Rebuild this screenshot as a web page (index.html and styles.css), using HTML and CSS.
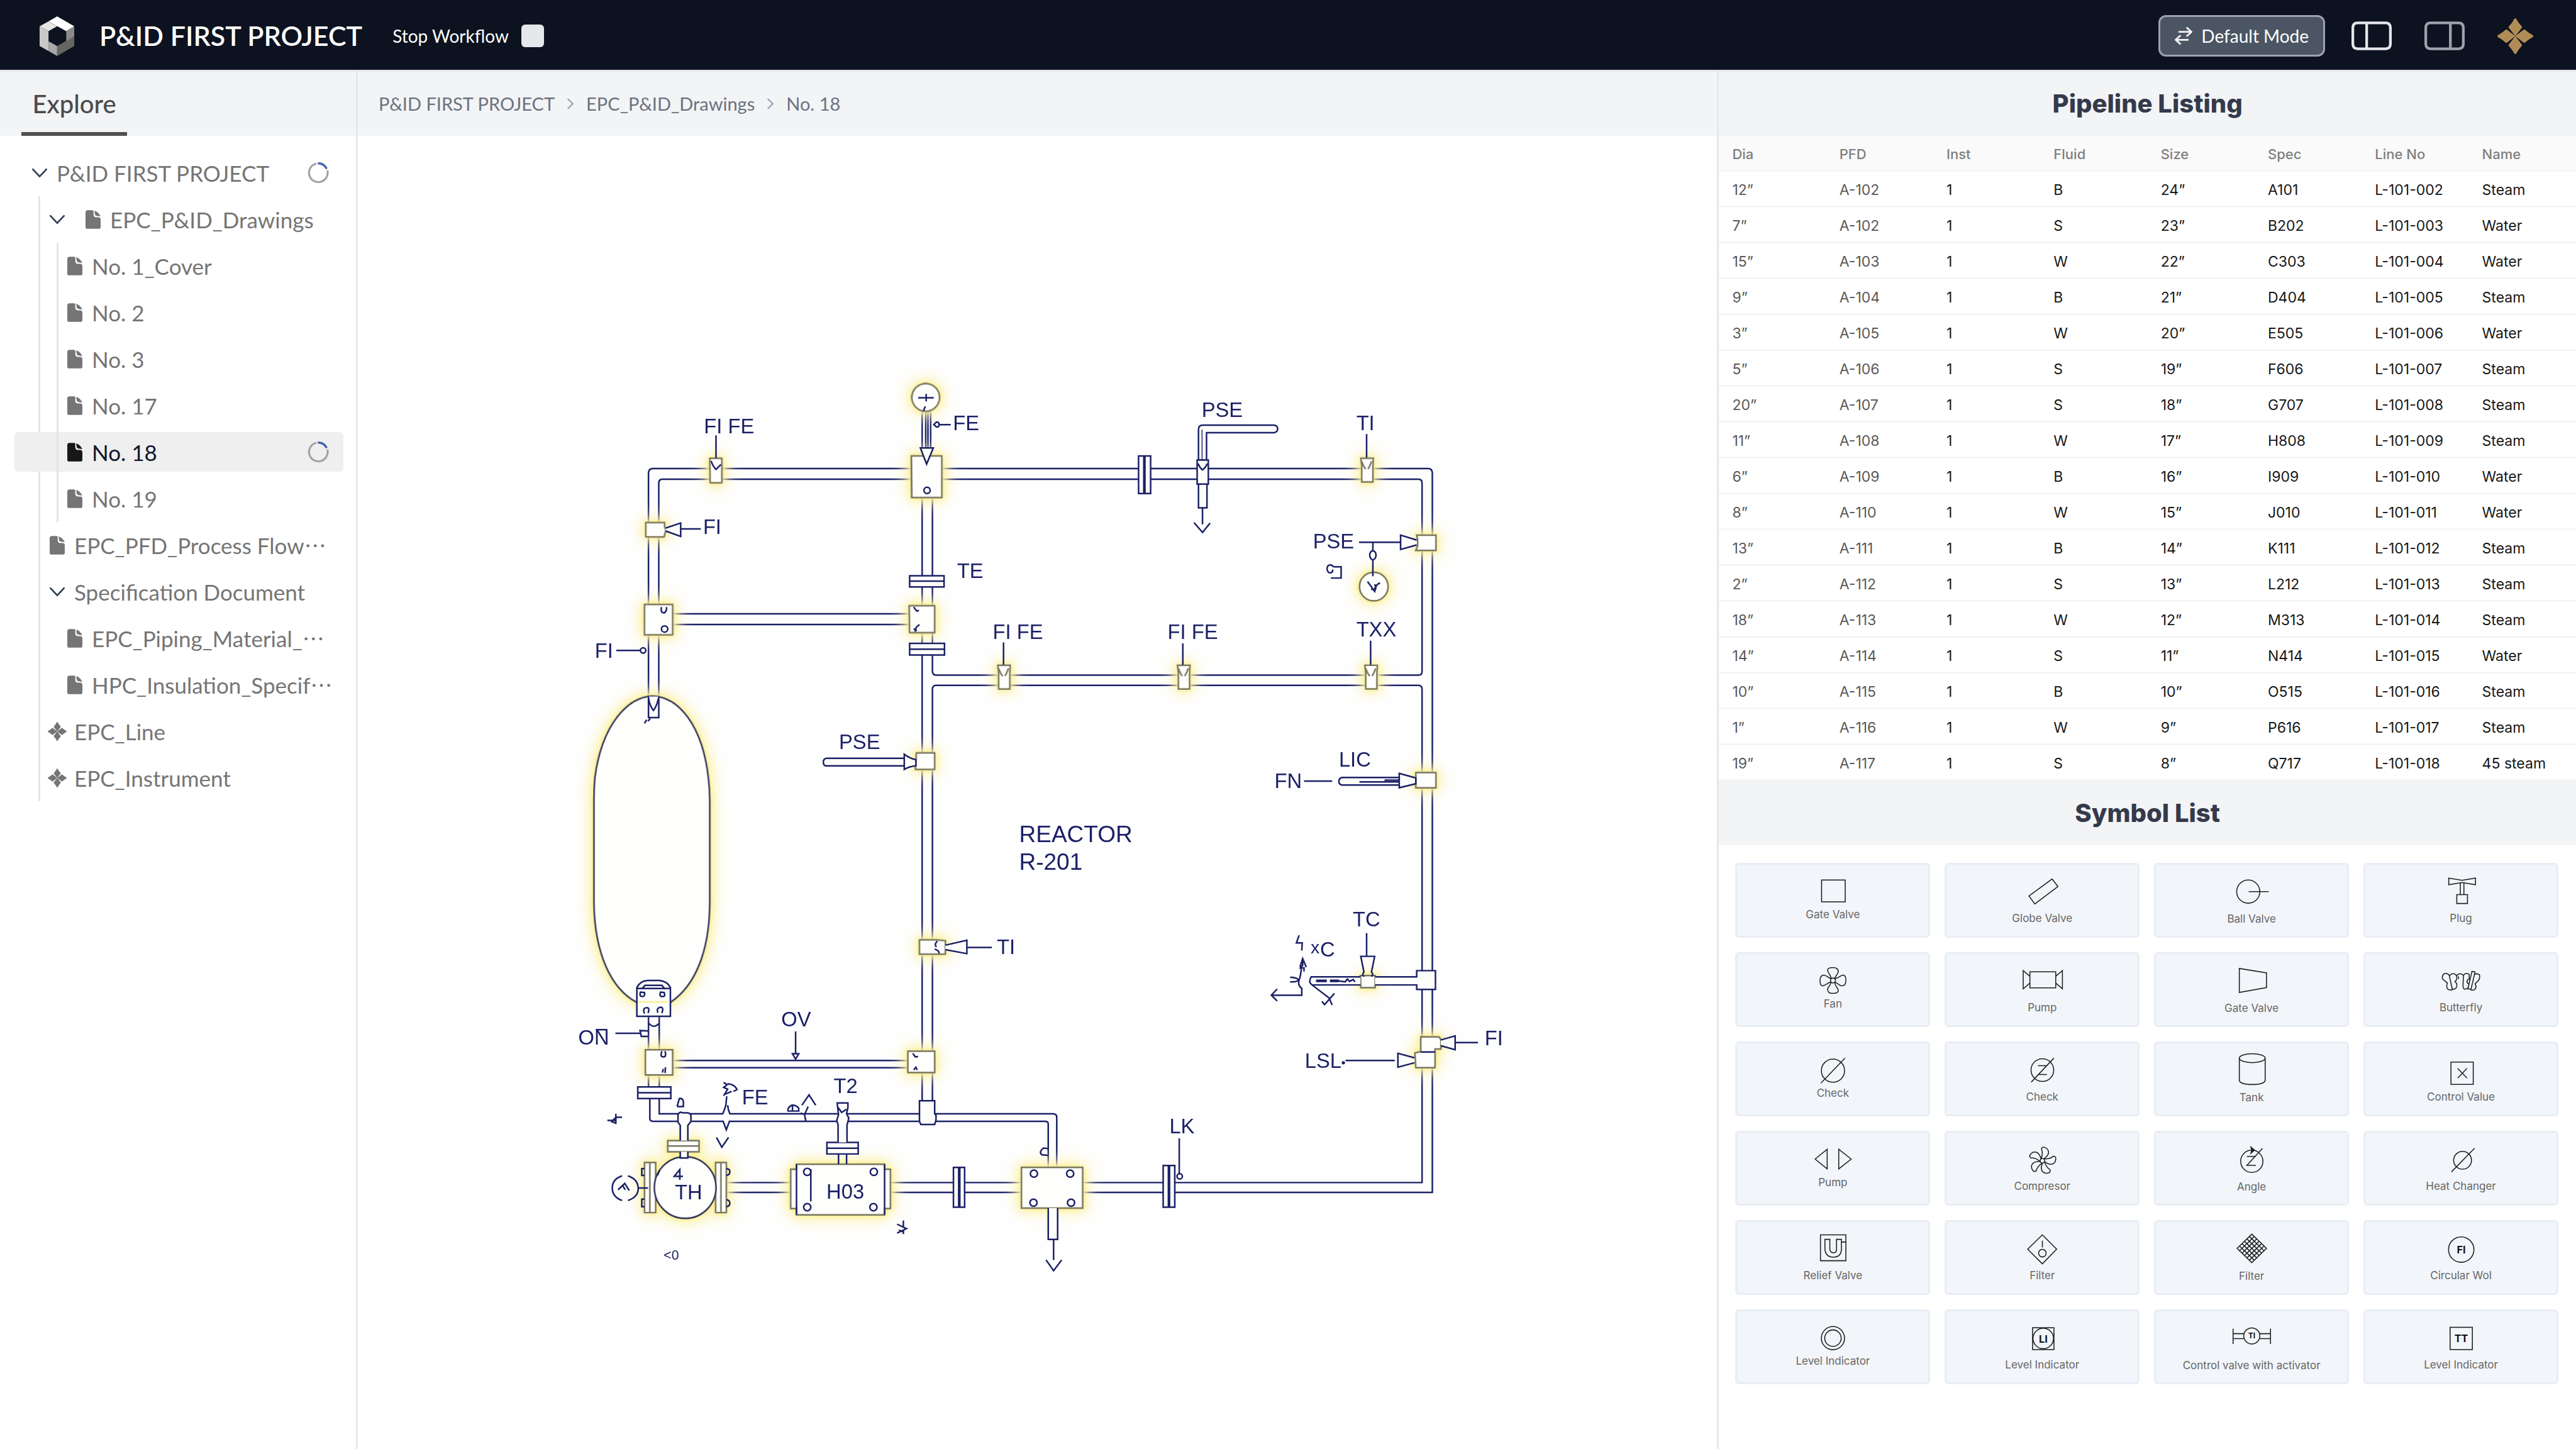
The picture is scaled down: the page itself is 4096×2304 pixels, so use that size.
FILE: index.html
```html
<!DOCTYPE html>
<html lang="en">
<head>
<meta charset="utf-8">
<meta name="viewport" content="width=device-width, initial-scale=1">
<title>P&amp;ID First Project</title>
<link rel="stylesheet" href="styles.css">
</head>
<body>
<svg class="defs" aria-hidden="true">
  <symbol id="file" viewBox="0 0 34 42"><path d="M5 0H16Q18 0 18 3V10Q18 15 23 16H30Q34 17 34 21V38Q34 42 30 42H4Q0 42 0 38V5Q0 0 5 0Z"/><path d="M20 1Q29 4 34 14L25 13Q21 12 21 8Z"/></symbol>
  <symbol id="chev" viewBox="0 0 34 42"><path d="M2 13 17 29 32 13" fill="none" stroke="#334155" stroke-width="4" stroke-linecap="round" stroke-linejoin="round"/></symbol>
  <symbol id="gem" viewBox="0 0 80 80"><path id="petal" d="M38 1Q40-1 42 1Q46 9 54 18Q56 20 54 22L40 40 26 22Q24 20 26 18Q34 9 38 1Z"/><use href="#petal" transform="rotate(90 40 40)"/><use href="#petal" transform="rotate(180 40 40)"/><use href="#petal" transform="rotate(270 40 40)"/></symbol>
  <symbol id="spin" viewBox="-24 -24 48 48"><path d="M21-4A21 21 0 1 1-6-20.500" fill="none" stroke="#a3a3a3" stroke-width="4.500" stroke-linecap="round"/><path d="M1-21.500A21 21 0 0 1 18-11" fill="none" stroke="#4a68a8" stroke-width="5" stroke-linecap="round"/></symbol>
  <symbol id="valve" viewBox="-20 0 40 60" overflow="visible"><path d="M-14 1H14L13 17V54H-12V17Z"/><path d="M-12 8Q-8 20-3 25M10 8Q6 20 2 25" fill="none"/></symbol>
</svg>

<header class="topbar">
  <svg class="logo" viewBox="0 0 78 89" role="img" aria-label="Logo"><path fill="#fff" d="M39.500 0 78 22 60 33 20 11Z"/><path fill="#e5e5e5" d="M20 11 39.500 22 20 33 0 22Z"/><path fill="#c9c9c7" d="M0 22 20 33V78L0 67Z"/><path fill="#a8a8a8" d="M20 56 39.500 67V89L20 78Z"/><path fill="#666563" d="M39.500 67 78 45V67L39.500 89Z"/><path fill="#8b8c8a" d="M60 33 78 22V45L60 56Z"/></svg>
  <h1 class="title">P&amp;ID FIRST PROJECT</h1>
  <button class="stop" type="button">Stop Workflow<span class="stop-mark"></span></button>
  <div class="tools">
    <button class="mode" type="button"><svg viewBox="0 0 40 40" class="swap"><path d="M10 11H38M28 2 38 11 28 20M30 29H2M12 20 2 29 12 38" fill="none" stroke="#f3f4f6" stroke-width="4" stroke-linejoin="round" stroke-linecap="round"/></svg>Default Mode</button>
    <div class="toggles">
      <button class="toggle" type="button" aria-label="Left panel"><svg viewBox="0 0 90 64"><path d="M14 3H76Q87 3 87 14V50Q87 61 76 61H14Q3 61 3 50V14Q3 3 14 3ZM34 3V61" fill="none" stroke="#e5e7eb" stroke-width="6"/></svg></button>
      <button class="toggle" type="button" aria-label="Right panel"><svg viewBox="0 0 90 64"><path d="M14 3H76Q87 3 87 14V50Q87 61 76 61H14Q3 61 3 50V14Q3 3 14 3ZM58 3V61" fill="none" stroke="#9ca3af" stroke-width="6"/></svg></button>
      <button class="account" type="button" aria-label="Account"><svg viewBox="0 0 80 80"><use href="#gem"/></svg></button>
    </div>
  </div>
</header>

<div class="shell">
  <aside class="side">
    <div class="bar side-bar"><button class="tab" type="button">Explore</button></div>
    <ul class="tree">
      <li>
        <button class="row l0" type="button" aria-expanded="true"><svg class="ic"><use href="#chev"/></svg><span>P&amp;ID FIRST PROJECT</span><svg class="spin"><use href="#spin"/></svg></button>
        <ul class="branch b1">
          <li>
            <button class="row l1" type="button" aria-expanded="true"><svg class="ic wide"><use href="#chev"/></svg><svg class="ic"><use href="#file"/></svg><span>EPC_P&amp;ID_Drawings</span></button>
            <ul class="branch b2">
              <li><button class="row l2" type="button"><svg class="ic"><use href="#file"/></svg><span>No. 1_Cover</span></button></li>
              <li><button class="row l2" type="button"><svg class="ic"><use href="#file"/></svg><span>No. 2</span></button></li>
              <li><button class="row l2" type="button"><svg class="ic"><use href="#file"/></svg><span>No. 3</span></button></li>
              <li><button class="row l2" type="button"><svg class="ic"><use href="#file"/></svg><span>No. 17</span></button></li>
              <li><button class="row l2 active" type="button"><svg class="ic"><use href="#file"/></svg><span>No. 18</span><svg class="spin"><use href="#spin"/></svg></button></li>
              <li><button class="row l2" type="button"><svg class="ic"><use href="#file"/></svg><span>No. 19</span></button></li>
            </ul>
          </li>
          <li><button class="row l1" type="button"><svg class="ic"><use href="#file"/></svg><span>EPC_PFD_Process Flow<span class="more" lang="ja">…</span></span></button></li>
          <li>
            <button class="row l1" type="button" aria-expanded="true"><svg class="ic"><use href="#chev"/></svg><span>Specification Document</span></button>
            <ul class="branch">
              <li><button class="row l2" type="button"><svg class="ic"><use href="#file"/></svg><span>EPC_Piping_Material_<span class="more" lang="ja">…</span></span></button></li>
              <li><button class="row l2" type="button"><svg class="ic"><use href="#file"/></svg><span>HPC_Insulation_Specif<span class="more" lang="ja">…</span></span></button></li>
            </ul>
          </li>
          <li><button class="row l1" type="button"><svg class="ic gem" viewBox="0 0 80 80"><use href="#gem"/></svg><span>EPC_Line</span></button></li>
          <li><button class="row l1" type="button"><svg class="ic gem" viewBox="0 0 80 80"><use href="#gem"/></svg><span>EPC_Instrument</span></button></li>
        </ul>
      </li>
    </ul>
  </aside>

  <main class="main">
    <nav class="bar crumbs" aria-label="Breadcrumb">
      <a href="#">P&amp;ID FIRST PROJECT</a>
      <svg viewBox="0 0 16 24"><path d="M3 2 13 12 3 22"/></svg>
      <a href="#">EPC_P&amp;ID_Drawings</a>
      <svg viewBox="0 0 16 24"><path d="M3 2 13 12 3 22"/></svg>
      <a href="#">No. 18</a>
    </nav>
    <div class="canvas">
      <svg class="drawing" viewBox="800 680 3040 2184" role="img" aria-label="Piping and instrumentation diagram">
        <rect class="sheet" x="914" y="784" width="2800" height="2060"/>
        <g class="pipe">
          <path d="M1450 1604V1058Q1450 1047 1460 1047H3193Q3203 1047 3203 1057V2666H1624"/>
          <path d="M1473 1604V1080Q1473 1071 1481 1071H3172Q3180 1071 3180 1080V1501Q3180 1509 3172 1509H2093Q2085 1509 2085 1500V1071"/>
          <path d="M2062 1071V2461M2085 2461V1541Q2085 1532 2093 1532H3172Q3180 1532 3180 1541V2644H1624"/>
          <path d="M1504 1372H2034M1504 1396H2034M1504 2371H2030M1504 2387H2030"/>
          <path d="M1450 2272V2430M1474 2272V2430M1451 2288Q1461 2300 1473 2289"/>
          <path d="M1453 2456V2500Q1453 2507 1460 2507H1617L1624 2526 1631 2507H2337Q2344 2507 2344 2513V2610"/>
          <path d="M1474 2456V2490H1616Q1620 2482 1623 2471L1625 2451M1627 2471Q1628 2482 1632 2490H2355Q2363 2490 2363 2498V2610"/>
          <path d="M2062 919V1001M2070 919V1001M2075 919V1001M2081 919V1001"/>
        </g>
        <g class="hot">
          <path class="dark" d="M1459 1556C1405 1556 1345 1620 1330 1740Q1328 1765 1328 1790V2020C1330 2130 1365 2210 1424 2241H1499C1553 2205 1586 2130 1587 2020V1790Q1587 1765 1584 1740C1571 1620 1515 1556 1459 1556Z"/>
          <circle cx="2070" cy="888" r="31"/>
          <path d="M2038 1019H2106V1112H2039Z"/>
          <path d="M1587 1024H1614V1079H1588Z"/>
          <path d="M1444 1168H1486V1178L1489 1184 1485 1200H1444Z"/>
          <path d="M1441 1351H1504V1419H1441Z"/>
          <path d="M2033 1354H2090V1414H2034Z"/>
          <path d="M2049 1683H2090V1720H2047Z"/>
          <path d="M2056 2101H2093L2114 2103V2133H2056Z"/>
          <use href="#valve" x="2225" y="1486" width="40" height="60"/>
          <use href="#valve" x="2627" y="1486" width="40" height="60"/>
          <use href="#valve" x="3046" y="1486" width="40" height="60"/>
          <use href="#valve" x="3037" y="1023" width="40" height="60"/>
          <path d="M3168 1196H3211V1230H3166L3170 1220V1206Z"/>
          <circle cx="3072" cy="1311" r="32"/>
          <path d="M3166 1727H3211V1761H3166Z"/>
          <path d="M3042 2181H3075V2208H3043Z"/>
          <path d="M3177 2318H3218L3222 2324V2345H3209V2387H3166L3164 2354 3177 2351Z"/>
          <path d="M1443 2347H1504V2403H1443Z"/>
          <path d="M2030 2350H2090V2398H2030Z"/>
          <path d="M1493 2550H1563V2575H1493ZM1493 2562H1563"/>
          <path d="M1441 2599H1466V2711H1441ZM1453 2599V2711M1600 2599H1624V2711H1600ZM1612 2599V2711"/>
          <circle class="dark" cx="1532" cy="2655" r="69"/>
          <path d="M1768 2614H1781V2603H1978V2614H1991V2702H1978V2716H1781V2702H1768Z"/>
          <path d="M2284 2610H2421V2701H2284Z"/>
        </g>
        <g class="ink">
          <path d="M2053 889H2088M2071 880V897M2069 908 2065 918"/>
          <path class="solid" d="M2058 1001H2087L2072 1037Z"/><circle cx="2073" cy="1096" r="7"/>
          <path d="M2088 949 2094 943Q2100 943 2100 949T2094 954ZM2100 949H2126"/>
          <path d="M1601 973V1024M1590 1030Q1595 1044 1601 1049L1612 1038"/>
          <path class="solid" d="M1489 1180 1522 1169V1199L1489 1187"/><path d="M1522 1182H1567"/>
          <path d="M1479 1357Q1476 1370 1485 1370Q1492 1366 1490 1357"/><ellipse cx="1486" cy="1406" rx="7" ry="7"/>
          <path d="M1378 1454H1432"/><circle cx="1438" cy="1454" r="6"/>
          <path class="solid" d="M1450 1557V1604H1473V1557"/><path d="M1450 1562Q1454 1580 1461 1588Q1468 1580 1472 1562M1441 1617 1446 1609M1449 1612 1454 1606"/>
          <path class="solid" d="M2034 1287H2111V1312H2034ZM2034 1438H2112V1464H2034Z"/><path d="M2034 1299H2111M2034 1451H2112"/>
          <path d="M2043 1357 2050 1366 2055 1364M2056 1396 2049 1402 2046 1412M2043 1405 2050 1410"/>
          <path class="solid" d="M2022 1695H1849Q1841 1695 1841 1704T1849 1712H2022"/>
          <path class="solid" d="M2022 1686Q2035 1696 2048 1698V1712Q2034 1713 2022 1720Z"/>
          <path d="M2096 2104Q2088 2112 2094 2117M2090 2122Q2100 2124 2100 2132"/><path class="solid" d="M2114 2113 2162 2102V2132L2114 2123"/><path d="M2162 2118H2218"/>
          <path d="M2244 1436V1486M2645 1438V1486M3065 1432V1486M3056 970V1023"/>
          <path class="solid" d="M2546 1019H2573V1103H2546Z"/><path class="bold" d="M2559 1019V1103"/>
          <path class="solid" d="M2680 1028V960Q2680 950 2690 950H2849Q2857 951 2857 958T2849 967H2698V1028Z"/><path class="thin" d="M2688 960V1028"/>
          <path class="solid" d="M2677 1028H2702V1082H2677ZM2680 1082H2699V1135H2680Z"/><path d="M2679 1036Q2684 1047 2689 1050Q2695 1046 2700 1036M2689 1135V1172M2670 1168 2689 1190 2706 1169"/>
          <path d="M3039 1212H3132M3070 1212V1231"/><ellipse cx="3070" cy="1241" rx="7" ry="10"/><path d="M3070 1251V1288M3058 1300 3067 1312 3074 1322 3077 1313 3074 1306M3066 1317H3074Q3077 1306 3086 1303"/>
          <path class="solid" d="M3168 1207 3132 1196V1228L3168 1218"/>
          <path d="M2982 1267Q2977 1260 2970 1264Q2964 1273 2972 1280Q2981 1281 2980 1273M2982 1267H2999V1292H2976"/>
          <path d="M2916 1746H2979"/><path class="solid" d="M3129 1738H3001Q2994 1740 2994 1747T3001 1755H3129M3129 1729 3166 1739V1752L3129 1761Z"/><path d="M3096 1744H3129M3040 1748H3129"/>
          <path d="M3056 2086V2138"/><path class="solid" d="M3042 2184H2932Q2927 2192 2930 2198L2934 2202H3042M3075 2184H3168V2170H3210V2212H3168V2202H3075"/>
          <path d="M3051 2182Q3044 2182 3050 2173L3043 2138H3074L3067 2173Q3073 2182 3066 2182"/>
          <path class="bold" d="M2943 2193H2967M2974 2193H2994"/><path d="M2994 2193 3008 2195 3013 2189 3018 2194 3026 2190 3030 2195"/>
          <path d="M2934 2202 2972 2231 2979 2247M2984 2221 2962 2246 2956 2239"/>
          <path d="M2905 2091 2899 2108H2912L2911 2125M2907 2162 2913 2143 2921 2162M2913 2145V2158L2908 2164H2916V2172M2910 2164Q2909 2180 2905 2191T2911 2210V2225H2843M2856 2211 2843 2225 2856 2238M2885 2185Q2900 2185 2904 2191Q2900 2196 2885 2195"/>
          <path class="solid" d="M3222 2325 3254 2316V2347L3222 2338M3163 2365 3126 2355V2386L3163 2376"/>
          <path d="M3254 2331H3305M3009 2371H3119M3177 2352H3209"/><circle cx="3004" cy="2376" r="2"/>
          <path class="solid" d="M1424 2272V2208Q1431 2193 1448 2192H1475Q1492 2194 1499 2208V2272ZM1424 2210H1499M1436 2210 1442 2203H1480L1486 2210"/>
          <path class="gold" d="M1426 2240H1497"/>
          <path d="M1432 2218Q1429 2228 1436 2228T1441 2219ZM1477 2218Q1473 2228 1481 2228T1485 2219ZM1441 2266Q1436 2254 1445 2253T1449 2265M1471 2264Q1467 2254 1476 2252T1480 2265"/>
          <path d="M1376 2310H1431M1449 2305 1431 2304 1434 2317 1449 2317M1332 2302H1358"/>
          <path d="M1480 2350Q1475 2363 1483 2363T1487 2350M1481 2398 1483 2390M1487 2399 1488 2386"/>
          <path d="M1779 2306V2356M1772 2356H1786L1779 2368ZM2041 2355 2047 2363 2053 2362M2043 2392 2048 2386 2051 2392"/>
          <path class="solid" d="M1426 2430H1500V2456H1426ZM1849 2554H1919V2580H1849Z"/><path d="M1426 2443H1500M1849 2567H1919"/>
          <path class="solid" d="M2056 2461H2090V2490L2093 2493V2504L2090 2514H2059L2056 2507Z"/>
          <path class="solid" d="M1521 2550V2516L1516 2509V2492Q1520 2484 1526 2488H1538Q1545 2490 1545 2494V2507L1538 2516V2550M1521 2575V2589H1538V2575"/>
          <path class="solid" d="M1874 2554V2515L1871 2505 1875 2492 1872 2466H1896V2476L1893 2490 1898 2500 1894 2515V2554M1875 2580V2603M1893 2580V2603"/><path d="M1874 2476 1882 2487 1893 2480"/>
          <path d="M1514 2474H1528V2462Q1526 2455 1519 2456L1514 2474"/>
          <path d="M1377 2490V2513M1358 2505H1377V2498H1391M1366 2507 1377 2511M1371 2504 1377 2498"/>
          <path d="M1618 2420 1626 2425 1618 2431 1627 2435 1618 2450M1627 2423Q1642 2424 1648 2436L1640 2440M1622 2446 1636 2440M1602 2543 1614 2565 1629 2543"/>
          <path d="M1761 2484H1786V2478Q1780 2470 1770 2471Q1760 2477 1762 2484M1772 2472V2484M1793 2471 1809 2448 1824 2471M1807 2474 1799 2492 1802 2507M1790 2489 1799 2491"/>
          <path d="M1391 2629Q1369 2636 1369 2656T1391 2684M1404 2629Q1426 2636 1427 2656T1404 2684M1427 2656H1449M1382 2660 1397 2646 1407 2662M1391 2649 1398 2660"/>
          <path d="M1441 2613H1435V2628H1441M1441 2681H1435V2698H1441M1624 2613Q1632 2613 1632 2620T1624 2628M1624 2682Q1632 2683 1632 2690T1624 2698"/>
          <path d="M1506 2632 1520 2615V2638M1510 2630H1527M1470 2628 1475 2616"/>
          <circle cx="1805" cy="2620" r="8"/><circle cx="1954" cy="2620" r="8"/><circle cx="1805" cy="2699" r="8"/><circle cx="1953" cy="2699" r="8"/>
          <path d="M1813 2614V2686M1781 2603V2716M1978 2603V2716"/>
          <path class="solid" d="M2132 2610H2157V2699H2132ZM2601 2606H2627V2699H2601Z"/><path class="bold" d="M2145 2610V2699M2614 2606V2699"/>
          <circle cx="2312" cy="2624" r="8"/><circle cx="2393" cy="2624" r="8"/><circle cx="2311" cy="2689" r="8"/><circle cx="2395" cy="2689" r="8"/>
          <path d="M2343 2568 2333 2567Q2322 2576 2330 2582L2343 2583"/>
          <path class="solid" d="M2344 2701V2771H2365V2701"/><path d="M2356 2771V2817M2339 2817 2356 2841 2374 2817"/>
          <path d="M2637 2545V2624"/><circle cx="2638" cy="2630" r="6"/>
          <path d="M2020 2729V2742M2020 2750V2759M2006 2737 2027 2747 2006 2757M2010 2750 2018 2754"/>
        </g>
        <g class="tags">
          <text x="2131" y="962">FE</text><text x="1574" y="968">FI FE</text><text x="1572" y="1193">FI</text><text x="1330" y="1470">FI</text>
          <text x="2140" y="1292">TE</text><text x="1876" y="1674">PSE</text><text x="2229" y="2133">TI</text><text x="2220" y="1428">FI FE</text>
          <text x="2611" y="1428">FI FE</text><text x="3033" y="1422">TXX</text><text x="3033" y="961">TI</text><text x="2687" y="932">PSE</text>
          <text x="2936" y="1226">PSE</text><text x="2994" y="1714">LIC</text><text x="2850" y="1762">FN</text><text x="3025" y="2071">TC</text>
          <text x="2952" y="2139">C</text><text class="x" x="2931" y="2131">x</text><text x="3320" y="2337">FI</text><text x="2918" y="2388">LSL</text>
          <text x="1293" y="2335">ON</text><text x="1747" y="2295">OV</text><text x="1864" y="2444">T2</text><text x="1659" y="2469">FE</text>
          <text x="1509" y="2681">TH</text><text x="1848" y="2680">H03</text><text x="2615" y="2534">LK</text><text class="small" x="1484" y="2816">&lt;0</text>
          <text class="big" x="2279" y="1882">REACTOR</text><text class="big" x="2279" y="1944">R-201</text>
        </g>
      </svg>
    </div>
  </main>

  <aside class="data">
    <h2 class="bar heading">Pipeline Listing</h2>
    <table class="lines">
      <thead><tr><th>Dia</th><th>PFD</th><th>Inst</th><th>Fluid</th><th>Size</th><th>Spec</th><th>Line No</th><th>Name</th></tr></thead>
      <tbody>
        <tr><td>12”</td><td>A-102</td><td>1</td><td>B</td><td>24”</td><td>A101</td><td>L-101-002</td><td>Steam</td></tr>
        <tr><td>7”</td><td>A-102</td><td>1</td><td>S</td><td>23”</td><td>B202</td><td>L-101-003</td><td>Water</td></tr>
        <tr><td>15”</td><td>A-103</td><td>1</td><td>W</td><td>22”</td><td>C303</td><td>L-101-004</td><td>Water</td></tr>
        <tr><td>9”</td><td>A-104</td><td>1</td><td>B</td><td>21”</td><td>D404</td><td>L-101-005</td><td>Steam</td></tr>
        <tr><td>3”</td><td>A-105</td><td>1</td><td>W</td><td>20”</td><td>E505</td><td>L-101-006</td><td>Water</td></tr>
        <tr><td>5”</td><td>A-106</td><td>1</td><td>S</td><td>19”</td><td>F606</td><td>L-101-007</td><td>Steam</td></tr>
        <tr><td>20”</td><td>A-107</td><td>1</td><td>S</td><td>18”</td><td>G707</td><td>L-101-008</td><td>Steam</td></tr>
        <tr><td>11”</td><td>A-108</td><td>1</td><td>W</td><td>17”</td><td>H808</td><td>L-101-009</td><td>Steam</td></tr>
        <tr><td>6”</td><td>A-109</td><td>1</td><td>B</td><td>16”</td><td>I909</td><td>L-101-010</td><td>Water</td></tr>
        <tr><td>8”</td><td>A-110</td><td>1</td><td>W</td><td>15”</td><td>J010</td><td>L-101-011</td><td>Water</td></tr>
        <tr><td>13”</td><td>A-111</td><td>1</td><td>B</td><td>14”</td><td>K111</td><td>L-101-012</td><td>Steam</td></tr>
        <tr><td>2”</td><td>A-112</td><td>1</td><td>S</td><td>13”</td><td>L212</td><td>L-101-013</td><td>Steam</td></tr>
        <tr><td>18”</td><td>A-113</td><td>1</td><td>W</td><td>12”</td><td>M313</td><td>L-101-014</td><td>Steam</td></tr>
        <tr><td>14”</td><td>A-114</td><td>1</td><td>S</td><td>11”</td><td>N414</td><td>L-101-015</td><td>Water</td></tr>
        <tr><td>10”</td><td>A-115</td><td>1</td><td>B</td><td>10”</td><td>O515</td><td>L-101-016</td><td>Steam</td></tr>
        <tr><td>1”</td><td>A-116</td><td>1</td><td>W</td><td>9”</td><td>P616</td><td>L-101-017</td><td>Steam</td></tr>
        <tr><td>19”</td><td>A-117</td><td>1</td><td>S</td><td>8”</td><td>Q717</td><td>L-101-018</td><td>45 steam</td></tr>
      </tbody>
    </table>
    <h2 class="bar heading">Symbol List</h2>
    <div class="symbols">
      <button class="card" type="button"><svg class="sy s" viewBox="-60 -28 120 56"><rect x="-25.500" y="-25" width="53" height="49"/></svg>Gate Valve</button>
      <button class="card" type="button"><svg class="sy m" viewBox="-60 -36 120 72"><path d="M22-28 35-11-17 28-30 10Z"/></svg>Globe Valve</button>
      <button class="card" type="button"><svg class="sy l" viewBox="-60 -38 120 76"><circle cx="-8" cy="1" r="26"/><path d="M-7 1H38"/></svg>Ball Valve</button>
      <button class="card" type="button"><svg class="sy m" viewBox="-60 -36 120 72"><path d="M-28-30 2-25 32-30V-15L2-20-28-15ZM-2-19V7M6-19V7M-10 7H14V27H-10Z"/></svg>Plug</button>

      <button class="card" type="button"><svg class="sy s" viewBox="-60 -28 120 56"><circle cx="0" cy="0" r="5.500"/><path id="bl" d="M-4-4C-5-14-12-17-12-23C-12-28-5-29 0-29C7-29 12-26 12-20C12-14 6-12 4-4"/><use href="#bl" transform="rotate(90)"/><use href="#bl" transform="rotate(180)"/><use href="#bl" transform="rotate(270)"/></svg>Fan</button>
      <button class="card" type="button"><svg class="sy m" viewBox="-60 -36 120 72"><path d="M-28-20H30V16H-28ZM-28-10-43-23V18L-28 5M30-10 45-23V18L30 5"/></svg>Pump</button>
      <button class="card" type="button"><svg class="sy l" viewBox="-60 -38 120 76"><path d="M-28-27 33-17V16L-28 27Z"/></svg>Gate Valve</button>
      <button class="card" type="button"><svg class="sy m" viewBox="-60 -36 120 72"><path d="M-27-12Q-31-18-38-16Q-44-11-42-4L-31 5Q-34 12-31 18Q-26 23-18 19Q-9 18-10 10Q-9 6-14 2Q-9-2-10-10Q-14-19-24-14Q-27-12-26-8L-20 19M-10-12Q-2-20 5-12L4 10Q4 19 9 19Q14 18 17 14M5-12Q11-20 18-14V-4Q8 0 17 8M24-21 31-20 22 19 15 18ZM30-14Q36-18 41-13Q44-4 34 4L31 7Q36 14 30 20Q24 22 21 20M-6-10V-4"/></svg>Butterfly</button>

      <button class="card" type="button"><svg class="sy s" viewBox="-60 -28 120 56"><circle cx="0" cy="2" r="26"/><path d="M27-26-27 30"/></svg>Check</button>
      <button class="card" type="button"><svg class="sy m" viewBox="-60 -36 120 72"><circle cx="0" cy="0" r="25.500"/><path d="M26-27-25 27M-10-10H10M-10 10H10"/></svg>Check</button>
      <button class="card" type="button"><svg class="sy l" viewBox="-60 -38 120 76"><ellipse cx="1" cy="-26" rx="29" ry="10"/><path d="M-28-26V24Q-26 33 1 33T30 24V-26"/></svg>Tank</button>
      <button class="card" type="button"><svg class="sy m" viewBox="-60 -36 120 72"><path d="M-23-18H27V32H-23ZM-8-4 13 18M13-4-8 18"/></svg>Control Value</button>

      <button class="card" type="button"><svg class="sy s" viewBox="-60 -28 120 56"><path d="M-40 0-13-22V22ZM41 0 13-22V22Z"/></svg>Pump</button>
      <button class="card" type="button"><svg class="sy m" viewBox="-60 -36 120 72"><circle cx="0" cy="3" r="5"/><path id="cb" d="M-3-1Q2-14-2-23Q-1-29 5-27Q14-24 14-15Q13-8 3-1"/><use href="#cb" transform="rotate(72 0 3)"/><use href="#cb" transform="rotate(144 0 3)"/><use href="#cb" transform="rotate(216 0 3)"/><use href="#cb" transform="rotate(288 0 3)"/></svg>Compresor</button>
      <button class="card" type="button"><svg class="sy l" viewBox="-60 -38 120 76"><circle cx="0" cy="5" r="25"/><path d="M24-24-11 14H9M-11-6H9"/><path class="fill" d="M-2-27 6-20-2-13 0-20Z"/></svg>Angle</button>
      <button class="card" type="button"><svg class="sy m" viewBox="-60 -36 120 72"><circle cx="3" cy="2" r="20"/><path d="M30-25-22 28"/></svg>Heat Changer</button>

      <button class="card" type="button"><svg class="sy m" viewBox="-60 -36 120 72"><path d="M-28-31H29V27H-28ZM-18-21H-7V2Q-6 9 1 9T8 2V-21H19V2Q18 19 1 19T-18 2ZM19-15H29"/></svg>Relief Valve</button>
      <button class="card" type="button"><svg class="sy m" viewBox="-60 -36 120 72"><path d="M0-31 32 1 0 34-33 1ZM0-18V-3"/><circle cx="0" cy="10" r="8.500"/></svg>Filter</button>
      <button class="card" type="button"><svg class="sy l" viewBox="-60 -38 120 76"><path d="M0-32 33 0 0 32-33 0ZM-5.500-26.700 27.500 5.300M-11-21.300 22 10.700M-16.500-16 16.500 16M-22-10.700 11 21.300M-27.500-5.300 5.500 26.700M5.500-26.700-27.500 5.300M11-21.300-22 10.700M16.500-16-16.500 16M22-10.700-11 21.300M27.500-5.300-5.500 26.700"/></svg>Filter</button>
      <button class="card" type="button"><svg class="sy m" viewBox="-60 -36 120 72"><circle cx="0" cy="2" r="28.500"/><text x="0" y="11">FI</text></svg>Circular Wol</button>

      <button class="card" type="button"><svg class="sy s" viewBox="-60 -28 120 56"><circle cx="0" cy="1" r="26"/><circle cx="0" cy="1" r="18.500"/></svg>Level Indicator</button>
      <button class="card" type="button"><svg class="sy m" viewBox="-60 -36 120 72"><rect x="-22" y="-23" width="48" height="49"/><circle cx="2" cy="1" r="23"/><text x="2" y="10">LI</text></svg>Level Indicator</button>
      <button class="card" type="button"><svg class="sy l" viewBox="-60 -38 120 76"><circle cx="0" cy="-4" r="18"/><path d="M-42-20V14M42-20V14M-42-9H-17M-42 2H-17M42-9H17M42 2H17"/><text class="mini" x="0" y="2">TI</text></svg>Control valve with activator</button>
      <button class="card" type="button"><svg class="sy m" viewBox="-60 -36 120 72"><rect x="-25" y="-24" width="50" height="50"/><text x="0" y="9">TT</text></svg>Level Indicator</button>
    </div>
  </aside>
</div>
</body>
</html>
```
FILE: styles.css
```css
* { box-sizing: border-box; }

body {
  margin: 0;
  min-height: 100vh;
  display: flex;
  flex-direction: column;
  background: #fff;
  font-family: Lato, "Noto Sans", sans-serif;
}

button {
  margin: 0;
  padding: 0;
  border: 0;
  background: none;
  color: inherit;
  font: inherit;
  text-align: left;
}

svg { display: block; flex: none; }
.defs { position: absolute; width: 0; height: 0; }

/* Top bar */
.topbar {
  display: flex;
  align-items: center;
  height: 114px;
  padding: 3px 68px 0 63px;
  background: #0c121f;
  border-bottom: 3px solid #e5e7eb;
  color: #fff;
}
.logo { width: 55px; height: 63px; }
.title { margin: 0 0 0 40px; font-size: 43px; line-height: 50px; font-weight: 600; }
.stop { display: flex; align-items: center; gap: 20px; margin-left: 48px; font-size: 28px; line-height: 36px; }
.stop-mark { width: 36px; height: 36px; border-radius: 6px; background: #e5e7eb; }
.tools { display: flex; align-items: center; gap: 42px; margin-left: auto; }
.mode {
  display: flex;
  align-items: center;
  gap: 14px;
  height: 66px;
  padding: 0 23px;
  border: 3px solid #9ca3af;
  border-radius: 12px;
  background: #4b5563;
  font-size: 28px;
  line-height: 36px;
}
.swap { width: 28px; height: 28px; }
.toggles { display: flex; align-items: center; gap: 52px; }
.toggle svg { width: 64px; height: 46px; }
.account svg { width: 57px; height: 57px; fill: #b08d57; }

/* Three columns */
.shell { flex: 1; display: grid; grid-template-columns: 569px minmax(0, 1fr) 33.34%; }
.bar { height: 102px; background: #f3f4f6; }

/* Explorer */
.side { border-right: 3px solid #e5e7eb; }
.side-bar { display: flex; padding-left: 34px; }
.tab {
  width: 168px;
  border-bottom: 6px solid #505050;
  padding-top: 5px;
  color: #4b4b4b;
  font-size: 40px;
  line-height: 48px;
  font-weight: 500;
  text-align: center;
}
.tree, .branch { margin: 0; padding: 0; list-style: none; }
.tree { padding-top: 22px; }
.branch { position: relative; }
.b1::before, .b2::before {
  content: "";
  position: absolute;
  top: 0;
  bottom: 0;
  width: 3px;
  background: #e5e5e5;
}
.b1::before { left: 61px; }
.b2::before { left: 90px; }
.row {
  display: flex;
  align-items: center;
  gap: 15px;
  width: 523px;
  height: 63px;
  margin: 5px 0 6px 23px;
  padding-right: 23px;
  border-radius: 6px;
  color: #757575;
  fill: #757575;
  font-size: 35px;
  line-height: 42px;
  white-space: nowrap;
}
.tree li { display: flow-root; }
.l0 { padding-left: 28px; }
.l1 { padding-left: 56px; }
.l2 { padding-left: 84px; }
.active { background: #efefef; color: #0f172a; fill: #171717; }
.ic { width: 24px; height: 30px; overflow: visible; }
.wide { margin-right: 18px; }
.gem { width: 30px; margin: 0 -3px; }
.spin { width: 34px; height: 34px; margin-left: auto; }
.more { font-family: "Noto Sans CJK JP", sans-serif; line-height: 1; }

/* Drawing */
.main { display: flex; flex-direction: column; }
.crumbs {
  display: flex;
  align-items: center;
  gap: 19px;
  padding-left: 33px;
  color: #6b7280;
  font-size: 29px;
  line-height: 36px;
}
.crumbs a { color: inherit; text-decoration: none; }
.crumbs svg { width: 12px; height: 18px; fill: none; stroke: #94a3b8; stroke-width: 3; stroke-linecap: round; }
.canvas { flex: 1; display: flex; align-items: center; }
.drawing { width: 100%; height: auto; }
.sheet { fill: #fefefe; }
.pipe { fill: none; stroke: #1b2166; stroke-width: 3.500; }
.hot {
  fill: #fefefc;
  stroke: #77755f;
  stroke-width: 3.500;
  filter: drop-shadow(0 0 5px #fbec80) drop-shadow(0 0 13px #fbf0a0) drop-shadow(0 0 18px #fdf6c4);
}
.hot .dark { stroke: #30345c; }
.ink { fill: none; stroke: #1b2166; stroke-width: 3.500; }
.ink .solid { fill: #fdfdfb; }
.ink .bold { stroke-width: 6; }
.ink .thin { stroke-width: 2; }
.ink .gold { stroke: #faf0a0; stroke-width: 4; }
.tags { fill: #1b2166; font-family: "Liberation Sans", sans-serif; font-size: 46px; }
.tags .big { font-size: 52px; }
.tags .small { font-size: 30px; }
.tags .x { font-size: 40px; }

/* Data panel */
.data { border-left: 3px solid #e5e7eb; font-family: Inter, "Noto Sans", sans-serif; }
.heading {
  margin: 0;
  color: #343a4b;
  font-size: 40px;
  line-height: 102px;
  font-weight: 800;
  text-align: center;
}
.lines { width: 100%; table-layout: fixed; border-collapse: separate; border-spacing: 0; color: #171717; font-size: 23px; line-height: 28px; }
.lines th, .lines td { height: 57px; padding: 3px 0 0 21px; border-bottom: 3px solid #f5f5f5; text-align: left; font-weight: 400; white-space: nowrap; }
.lines th { background: #fafafa; color: #7f7f7f; font-size: 22px; font-weight: 500; }
.lines td:nth-child(-n+2) { color: #595959; }
.symbols { display: grid; grid-template-columns: repeat(4, minmax(0, 1fr)); gap: 23px; padding: 28px 28px 28px 26px; }
.card {
  display: flex;
  flex-direction: column;
  align-items: center;
  justify-content: center;
  gap: 6px;
  height: 119px;
  border: 3px solid #e8edf5;
  border-radius: 6px;
  background: #f2f5f9;
  color: #666;
  font-size: 17px;
  line-height: 23px;
}
.sy { width: 85px; overflow: visible; fill: none; stroke: #1f1f1f; stroke-width: 2.200; }
.s { height: 40px; }
.m { height: 51px; }
.l { height: 54px; }
.sy .fill { fill: #111; }
.sy text { fill: #111; stroke: none; font-size: 23px; font-weight: 700; text-anchor: middle; }
.sy .mini { font-size: 17px; }
```
